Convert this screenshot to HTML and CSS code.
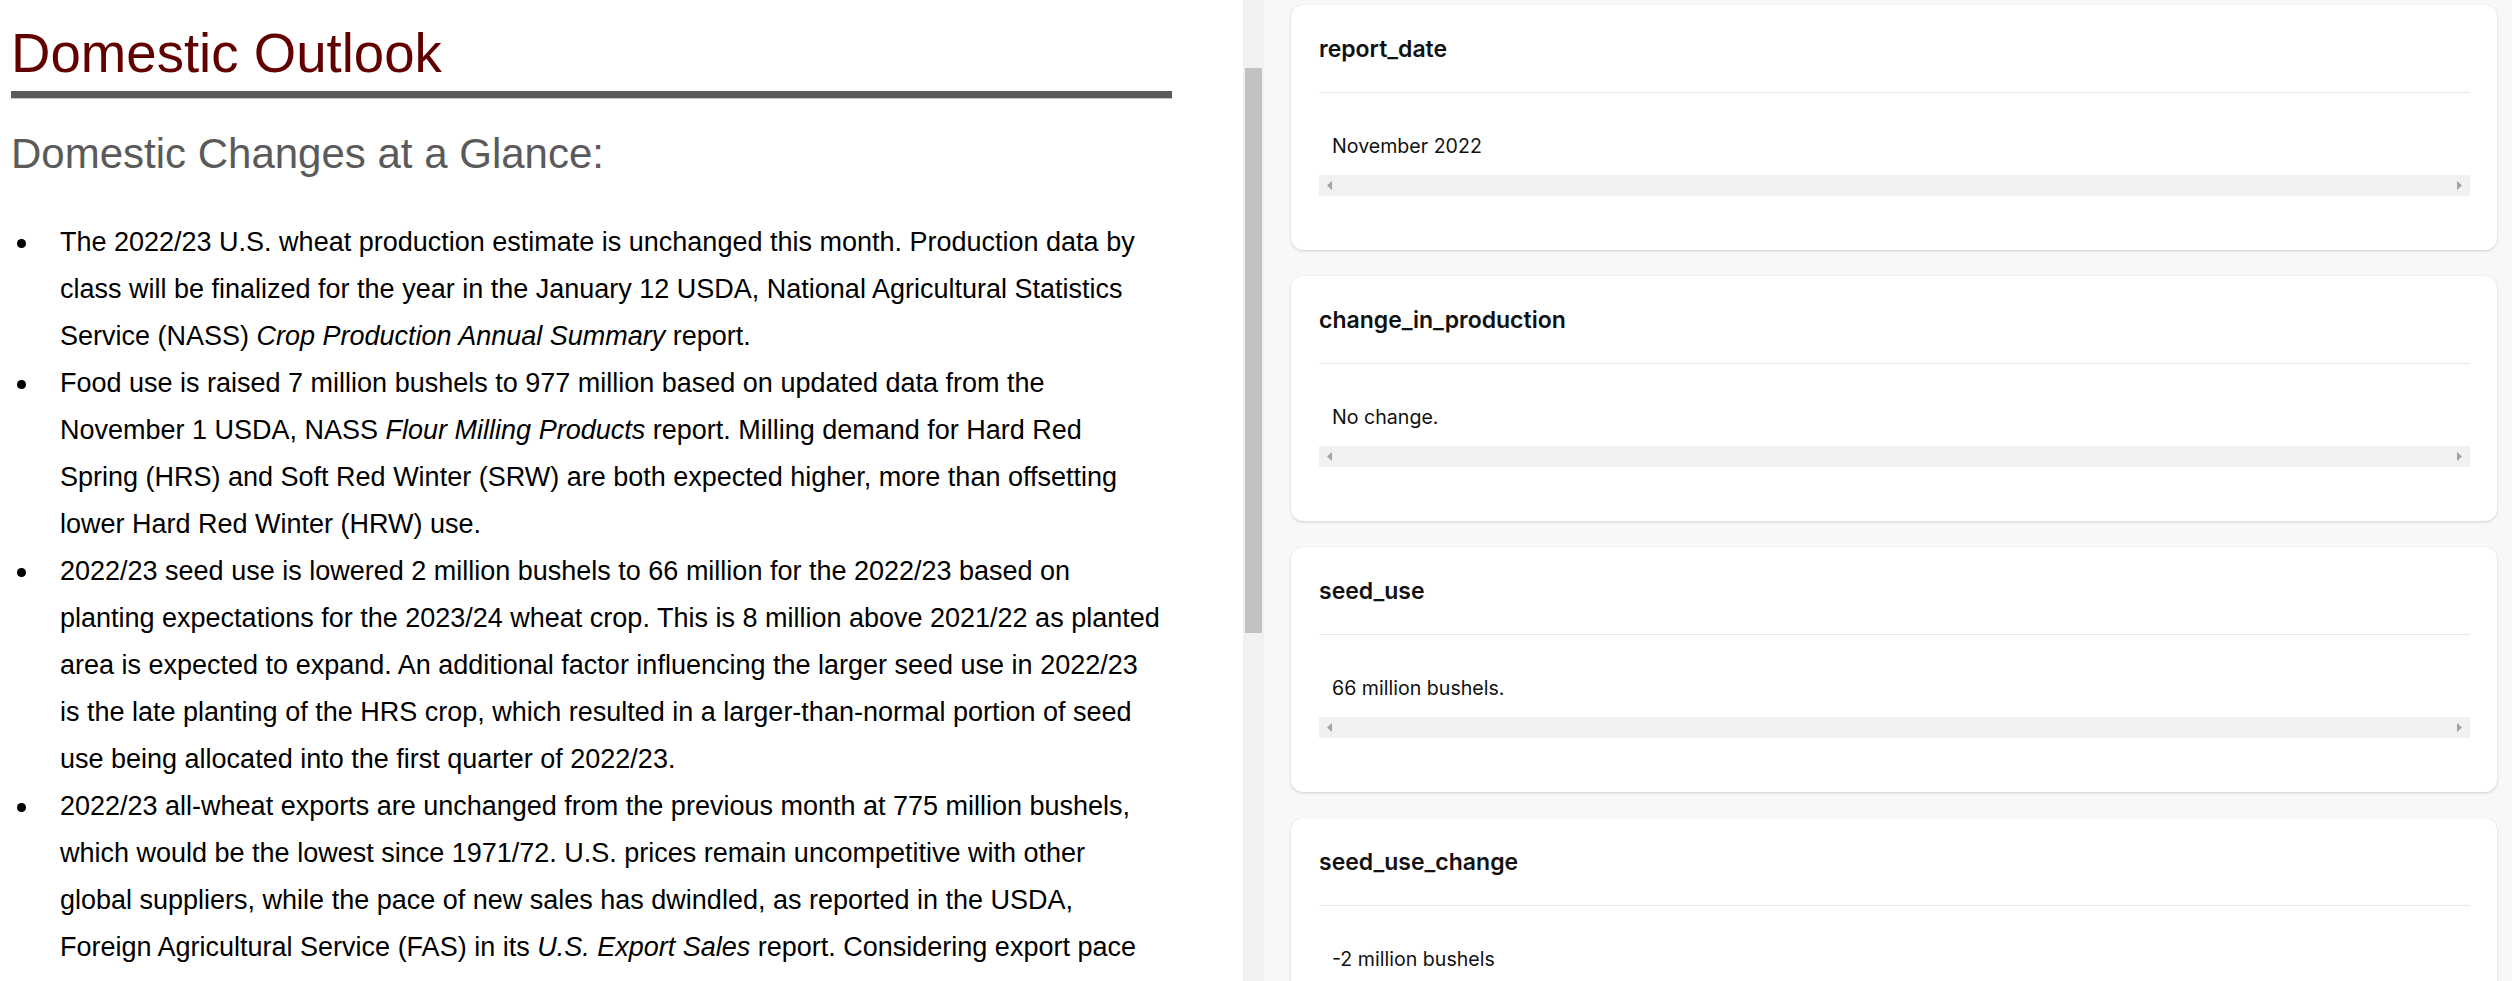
FILE: index.html
```html
<!DOCTYPE html>
<html lang="en">
<head>
<meta charset="utf-8">
<title>Domestic Outlook</title>
<link rel="stylesheet" href="styles.css">
</head>
<body>
<div class="app">
  <main class="doc-pane">
    <div class="doc">
      <h1 class="title">Domestic Outlook</h1>
      <h2 class="subtitle">Domestic Changes at a Glance:</h2>
      <ul class="changes">
        <li><span class="txt">The 2022/23 U.S. wheat production estimate is unchanged this month. Production data by class will be finalized for the year in the January 12 USDA, National Agricultural Statistics Service (NASS) <em>Crop Production Annual Summary</em> report.</span></li>
        <li><span class="txt">Food use is raised 7 million bushels to 977 million based on updated data from the November 1 USDA, NASS <em>Flour Milling Products</em> report. Milling demand for Hard Red Spring (HRS) and Soft Red Winter (SRW) are both expected higher, more than offsetting lower Hard Red Winter (HRW) use.</span></li>
        <li><span class="txt">2022/23 seed use is lowered 2 million bushels to 66 million for the 2022/23 based on planting expectations for the 2023/24 wheat crop. This is 8 million above 2021/22 as planted area is expected to expand. An additional factor influencing the larger seed use in 2022/23 is the late planting of the HRS crop, which resulted in a larger-than-normal portion of seed use being allocated into the first quarter of 2022/23.</span></li>
        <li><span class="txt">2022/23 all-wheat exports are unchanged from the previous month at 775 million bushels, which would be the lowest since 1971/72. U.S. prices remain uncompetitive with other global suppliers, while the pace of new sales has dwindled, as reported in the USDA, Foreign Agricultural Service (FAS) in its <em>U.S. Export Sales</em> report. Considering export pace through the first half of the marketing year, the export forecast is left unchanged.</span></li>
      </ul>
    </div>
    <div class="vscroll">
      <div class="vthumb"></div>
    </div>
  </main>
  <aside class="fields">
    <section class="card">
      <h3 class="card-title">report_date</h3>
      <hr class="card-rule">
      <div class="card-value">
        <p class="value-text">November 2022</p>
        <div class="hscroll"><span class="harrow left"></span><span class="harrow right"></span></div>
      </div>
    </section>
    <section class="card">
      <h3 class="card-title">change_in_production</h3>
      <hr class="card-rule">
      <div class="card-value">
        <p class="value-text">No change.</p>
        <div class="hscroll"><span class="harrow left"></span><span class="harrow right"></span></div>
      </div>
    </section>
    <section class="card">
      <h3 class="card-title">seed_use</h3>
      <hr class="card-rule">
      <div class="card-value">
        <p class="value-text">66 million bushels.</p>
        <div class="hscroll"><span class="harrow left"></span><span class="harrow right"></span></div>
      </div>
    </section>
    <section class="card">
      <h3 class="card-title">seed_use_change</h3>
      <hr class="card-rule">
      <div class="card-value">
        <p class="value-text">-2 million bushels</p>
        <div class="hscroll"><span class="harrow left"></span><span class="harrow right"></span></div>
      </div>
    </section>
  </aside>
</div>
</body>
</html>
```

FILE: styles.css
```css
html, body {
  margin: 0;
  padding: 0;
  height: 100%;
}
body {
  overflow: hidden;
  font-family: "Liberation Sans", Arial, sans-serif;
  background: #f8f8f7;
}
.app {
  display: flex;
  height: 981px;
}

/* ---------- left document pane ---------- */
.doc-pane {
  flex: none;
  width: 1264px;
  display: flex;
  background: #ffffff;
  overflow: hidden;
}
.doc {
  flex: none;
  width: 1161px;
  margin-left: 11px;
}
.title {
  margin: 0;
  padding: 22.7px 0 5.5px;
  font-size: 54.6px;
  line-height: 62.8px;
  font-weight: normal;
  color: #620000;
  border-bottom: 7px solid #5a5a5a;
  box-shadow: 0 1px 0 #c6c6c6;
}
.subtitle {
  margin: 32px 0 0;
  font-size: 42px;
  line-height: 47px;
  font-weight: normal;
  color: #5a5a5a;
}
.changes {
  list-style: none;
  margin: 41.9px 0 0;
  padding: 0;
}
.changes li {
  display: flex;
  padding-right: 9px;
  font-size: 27px;
  line-height: 47px;
  color: #000;
}
.changes li::before {
  content: "";
  flex: none;
  width: 8.7px;
  height: 8.7px;
  margin: 20.4px 34px 0 6.3px;
  border-radius: 50%;
  background: #000;
}
.txt {
  flex: 1;
  min-width: 0;
}

/* fake vertical scrollbar */
.vscroll {
  flex: none;
  margin-left: auto;
  width: 21px;
  padding-top: 68px;
  background: #f1f1f1;
}
.vthumb {
  height: 565px;
  margin: 0 2px;
  background: #c1c1c1;
}

/* ---------- right fields pane ---------- */
.fields {
  flex: 1;
  min-width: 0;
  background: #f8f8f7;
  padding: 5px 15px 0 27px;
  display: flex;
  flex-direction: column;
  gap: 26px;
  overflow: hidden;
}
.card {
  flex: none;
  background: #ffffff;
  border-radius: 12px;
  box-shadow: 0 1px 3px rgba(0, 0, 0, 0.16), 0 0 1px rgba(0, 0, 0, 0.06);
  padding: 29.6px 27px 54px 28px;
}
.card-title {
  margin: 0;
  font-family: Inter, "Noto Sans", sans-serif;
  font-weight: 600;
  font-size: 23px;
  line-height: 28px;
  color: #111111;
}
.card-rule {
  margin: 29.4px 0 0;
  height: 0;
  border: 0;
  border-top: 1px solid #e9e8e5;
}
.card-value {
  padding-top: 38.85px;
}
.value-text {
  margin: 0;
  padding-left: 13px;
  font-family: Inter, "Noto Sans", sans-serif;
  font-weight: 400;
  font-size: 19.6px;
  line-height: 28px;
  color: #111111;
  white-space: nowrap;
}
.hscroll {
  margin-top: 15.15px;
  height: 21px;
  padding: 0 8px;
  background: #f1f1f1;
  display: flex;
  align-items: center;
  justify-content: space-between;
}
.harrow {
  width: 5px;
  height: 9px;
  background: #a3a3a3;
}
.harrow.left {
  clip-path: polygon(100% 0, 0 50%, 100% 100%);
}
.harrow.right {
  clip-path: polygon(0 0, 100% 50%, 0 100%);
}
```
